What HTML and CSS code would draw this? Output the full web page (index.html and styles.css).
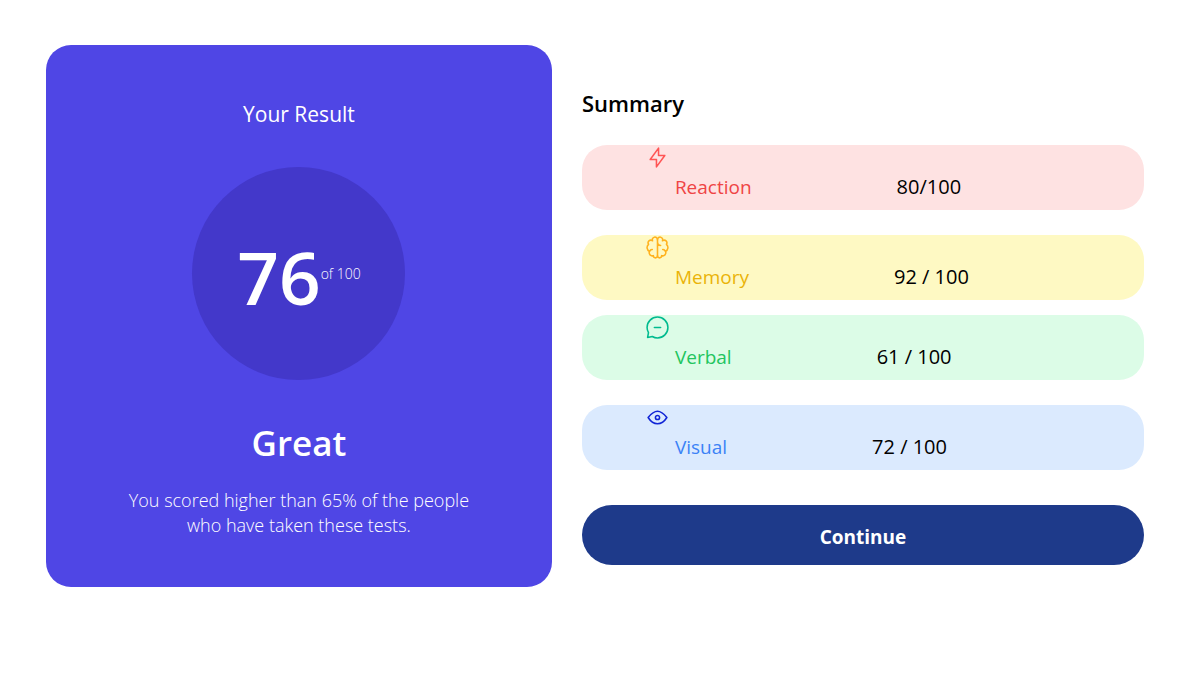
FILE: index.html
```html
<!DOCTYPE html>
<html lang="en">
<head>
  <meta charset="utf-8">
  <meta name="viewport" content="width=device-width, initial-scale=1">
  <title>Results summary</title>
  <link rel="stylesheet" href="styles.css">
</head>
<body>
  <main class="results">
    <section class="score">
      <h2 class="score-title">Your Result</h2>
      <div class="score-circle">
        <span class="score-value">76</span><span class="score-total">of 100</span>
      </div>
      <h1 class="score-grade">Great</h1>
      <p class="score-text">You scored higher than 65% of the people who have taken these tests.</p>
    </section>

    <section class="summary">
      <h2 class="summary-title">Summary</h2>
      <div class="group">
        <div class="item reaction">
          <svg class="icon" viewBox="0 0 20 20" aria-hidden="true"><path d="M10.833 8.333V2.5l-6.666 9.167h5V17.5l6.666-9.167h-5Z"/></svg>
          <p class="line"><span class="label">Reaction</span><span class="value">80/100</span></p>
        </div>
        <div class="item memory">
          <svg class="icon" viewBox="0 0 20 20" aria-hidden="true"><path d="M5.833 11.667a2.5 2.5 0 1 0 .834 4.858"/><path d="M3.553 13.004a3.333 3.333 0 0 1-.728-5.53m.025-.067a2.083 2.083 0 0 1 2.983-2.824m.199.054A2.083 2.083 0 1 1 10 3.75v12.917a1.667 1.667 0 0 1-3.333 0M10 5.833a2.5 2.5 0 0 0 2.5 2.5m1.667 3.334a2.5 2.5 0 1 1-.834 4.858"/><path d="M16.447 13.004a3.334 3.334 0 0 0 .728-5.53m-.025-.067a2.083 2.083 0 0 0-2.983-2.824M10 3.75a2.085 2.085 0 0 1 2.538-2.033 2.084 2.084 0 0 1 1.43 2.92m-.635 12.03a1.667 1.667 0 0 1-3.333 0"/></svg>
          <p class="line"><span class="label">Memory</span><span class="value">92 / 100</span></p>
        </div>
      </div>
      <div class="group">
        <div class="item verbal">
          <svg class="icon" viewBox="0 0 20 20" aria-hidden="true"><path d="M7.5 10h5M10 18.333A8.333 8.333 0 1 0 1.667 10c0 1.518.406 2.942 1.115 4.167l-.699 3.75 3.75-.699A8.295 8.295 0 0 0 10 18.333Z"/></svg>
          <p class="line"><span class="label">Verbal</span><span class="value">61 / 100</span></p>
        </div>
        <div class="item visual">
          <svg class="icon" viewBox="0 0 20 20" aria-hidden="true"><path d="M10 11.667a1.667 1.667 0 1 0 0-3.334 1.667 1.667 0 0 0 0 3.334Z"/><path d="M17.5 10c-1.574 2.492-4.402 5-7.5 5s-5.926-2.508-7.5-5C4.416 7.632 6.66 5 10 5s5.584 2.632 7.5 5Z"/></svg>
          <p class="line"><span class="label">Visual</span><span class="value">72 / 100</span></p>
        </div>
      </div>
      <button class="continue" type="button">Continue</button>
    </section>
  </main>
</body>
</html>
```
FILE: styles.css
```css
* {
  box-sizing: border-box;
}

body {
  margin: 0;
  background: #fff;
  color: #000;
  font-family: "Segoe UI", "Open Sans", "Noto Sans", sans-serif;
  font-size: 19px;
}

h1, h2, p {
  margin: 0;
}

.results {
  display: grid;
  grid-template-columns: 9fr 10fr;
  gap: 30px;
  align-items: start;
  padding: 45px 38px 45px 46px;
}

.score {
  display: flex;
  flex-direction: column;
  align-items: center;
  padding: 54px 72px 48px;
  border-radius: 25px;
  background: #4f46e5;
  color: #fff;
  text-align: center;
}

.score-title {
  font-size: 21px;
  font-weight: 400;
  line-height: 30px;
}

.score-circle {
  display: flex;
  align-items: center;
  justify-content: center;
  width: 213px;
  height: 213px;
  margin-top: 38px;
  border-radius: 50%;
  background: #4338ca;
}

.score-value {
  padding-top: 6px;
  font-size: 73px;
  font-weight: 600;
  line-height: 75px;
}

.score-total {
  font-size: 14px;
  font-weight: 300;
  line-height: 20px;
}

.score-grade {
  margin-top: 40px;
  font-size: 35px;
  font-weight: 600;
  line-height: 46px;
}

.score-text {
  max-width: 350px;
  margin-top: 22px;
  margin-bottom: 1px;
  font-size: 18px;
  font-weight: 300;
  line-height: 25px;
}

.summary {
  padding-top: 43px;
}

.summary-title {
  margin-bottom: 27px;
  font-size: 22px;
  font-weight: 600;
  line-height: 30px;
}

.group {
  display: grid;
  gap: 25px;
  margin-bottom: 15px;
}

.item {
  height: 65px;
  padding: 0 63px;
  border-radius: 25px;
}

.icon {
  display: block;
  width: 25px;
  height: 25px;
  fill: none;
  stroke: currentColor;
  stroke-width: 1.25;
  stroke-linecap: round;
  stroke-linejoin: round;
}

.line {
  display: flex;
  gap: 145px;
  padding: 2px 0 0 30px;
  color: #000;
  line-height: 30px;
}

.value {
  font-size: 20px;
}

.reaction {
  background: #fee2e2;
  color: #f55;
}

.reaction .label {
  color: #ef4444;
}

.memory {
  background: #fef9c3;
  color: #ffb21e;
}

.memory .label {
  color: #eab308;
}

.verbal {
  background: #dcfce7;
  color: #00bb8f;
}

.verbal .label {
  color: #22c55e;
}

.visual {
  background: #dbeafe;
  color: #1125d6;
}

.visual .label {
  color: #3b82f6;
}

.continue {
  width: 100%;
  height: 60px;
  margin-top: 20px;
  padding: 4px 0 0;
  border: 0;
  border-radius: 30px;
  background: #1e3a8a;
  color: #fff;
  font: inherit;
  font-weight: 700;
}
```
